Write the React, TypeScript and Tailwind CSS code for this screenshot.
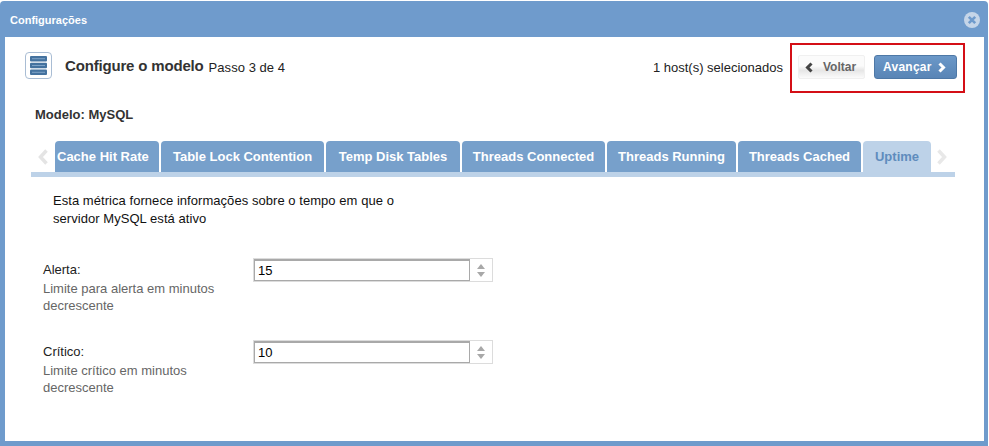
const TABS = [
  { label: "Cache Hit Rate", width: "w-[104px]", pad: "pl-[2px] text-left" },
  { label: "Table Lock Contention", width: "w-[163px]", pad: "text-center" },
  { label: "Temp Disk Tables", width: "w-[134px]", pad: "text-center" },
  { label: "Threads Connected", width: "w-[143px]", pad: "text-center" },
  { label: "Threads Running", width: "w-[129px]", pad: "text-center" },
  { label: "Threads Cached", width: "w-[123px]", pad: "text-center" },
];

const FIELDS = [
  { label: "Alerta:", help: "Limite para alerta em minutos decrescente", value: "15" },
  { label: "Crítico:", help: "Limite crítico em minutos decrescente", value: "10" },
];

function Chevron({ dir, w, h, sw, color }: { dir: "left" | "right"; w: number; h: number; sw: number; color: string }) {
  const d = dir === "left" ? `M${w - 1.5} 1.5 L2.5 ${h / 2} L${w - 1.5} ${h - 1.5}` : `M1.5 1.5 L${w - 2.5} ${h / 2} L1.5 ${h - 1.5}`;
  return (
    <svg width={w} height={h} viewBox={`0 0 ${w} ${h}`} className="flex-none">
      <path d={d} fill="none" stroke={color} strokeWidth={sw} />
    </svg>
  );
}

function ServerIcon() {
  return (
    <div className="flex h-[27px] w-[27px] flex-none items-center justify-center rounded-[4px] border border-[#a9bdd4] bg-white">
      <svg width="17" height="19" viewBox="0 0 17 19">
        <rect x="0" y="0" width="17" height="5.5" rx="1" fill="#44729f" />
        <rect x="0" y="6.7" width="17" height="5.5" rx="1" fill="#44729f" />
        <rect x="0" y="13.5" width="17" height="5.5" rx="1" fill="#44729f" />
        <rect x="2" y="2.2" width="13" height="1" fill="#7fa3c7" />
        <rect x="2" y="9" width="13" height="1" fill="#7fa3c7" />
        <rect x="2" y="15.8" width="13" height="1" fill="#7fa3c7" />
      </svg>
    </div>
  );
}

function CloseIcon() {
  return (
    <svg width="16" height="16" viewBox="0 0 16 16">
      <circle cx="8" cy="8" r="8" fill="#c5d5e8" />
      <path d="M4.8 4.8 L11.2 11.2 M11.2 4.8 L4.8 11.2" stroke="#6f9bcc" strokeWidth="2.6" />
    </svg>
  );
}

function NumberField({ value }: { value: string }) {
  return (
    <div className="flex h-[24px] w-[240px] flex-none border border-[#dcdcdc] bg-white">
      <div className="flex h-[22px] w-[216px] items-center border border-t-2 border-[#a9a9a9] pl-[3px] text-[13px] text-black">
        {value}
      </div>
      <div className="flex flex-1 flex-col items-center justify-center gap-[3px]">
        <div className="h-0 w-0 border-x-[4px] border-b-[5px] border-x-transparent border-b-[#a8a8a8]" />
        <div className="h-0 w-0 border-x-[4px] border-t-[5px] border-x-transparent border-t-[#a8a8a8]" />
      </div>
    </div>
  );
}

export default function App() {
  return (
    <div className="h-[446px] w-[989px] overflow-hidden bg-white font-['Liberation_Sans',Arial,sans-serif]">
      <div className="mt-px flex h-[445px] w-[988px] flex-col rounded-t-[4px] bg-[#6f9bcc]">
        {/* Title bar */}
        <div className="flex h-[36px] flex-none items-center justify-between pl-[10px] pr-[8px] pt-[2px]">
          <span className="text-[11px] font-bold text-white">Configurações</span>
          <CloseIcon />
        </div>

        {/* Body */}
        <div className="mb-[5px] ml-[5px] mr-[4px] flex-1 bg-white">
          {/* Header row */}
          <div className="flex h-[56px] items-center pl-[20px] pr-[19px] pt-[1px]">
            <ServerIcon />
            <span className="ml-[13px] mt-[1px] text-[15px] font-bold tracking-[-0.17px] text-[#333]">Configure o modelo</span>
            <span className="ml-[5px] mt-[5px] text-[13px] tracking-[0.05px] text-[#222]">Passo 3 de 4</span>
            <span className="ml-auto mr-[7px] mt-[5px] text-[13px] text-[#222]">1 host(s) selecionados</span>
            <div className="mt-[5px] box-border flex h-[50px] w-[175px] flex-none items-center gap-[9px] border-2 border-[#d40f16] pb-[2px] pl-[6px]">
              <button className="flex h-[24px] w-[67px] items-center rounded-[2px] border border-[#f0f0f0] bg-[linear-gradient(#fbfbfb_45%,#e6e6e6_65%,#fbfbfb)] pl-[6px] text-[12px] font-bold text-[#666]">
                <Chevron dir="left" w={8} h={11} sw={3} color="#444" />
                <span className="ml-[10px]">Voltar</span>
              </button>
              <button className="flex h-[24px] w-[83px] items-center rounded-[3px] border border-[#4e78a6] bg-[linear-gradient(#6b98c8,#5985b6)] pl-[8px] text-[12px] font-bold tracking-[0.25px] text-white">
                Avançar
                <span className="ml-[6px]">
                  <Chevron dir="right" w={8} h={11} sw={3} color="#fff" />
                </span>
              </button>
            </div>
          </div>

          <div className="mt-[15px] pl-[30px] text-[13px] font-bold leading-[14px] text-[#333]">Modelo: MySQL</div>

          {/* Tabs */}
          <div className="mx-[26px] mt-[19px] w-[924px] border-b-[5px] border-[#bdd2e8]">
            <div className="flex h-[31px]">
              <div className="flex w-[24px] flex-none items-center pl-[7px]">
                <Chevron dir="left" w={10} h={16} sw={3.5} color="#e4e4e4" />
              </div>
              <div className="flex gap-[2px]">
                {TABS.map((tab) => (
                  <div
                    key={tab.label}
                    className={`${tab.width} ${tab.pad} flex-none rounded-t-[4px] bg-[#77a0cb] text-[13px] font-bold leading-[31px] text-white`}
                  >
                    {tab.label}
                  </div>
                ))}
                <div className="w-[68px] flex-none rounded-t-[4px] bg-[#bdd2e8] text-center text-[13px] font-bold leading-[31px] text-[#5f8cbd]">
                  Uptime
                </div>
              </div>
              <div className="flex flex-none items-center pl-[6px]">
                <Chevron dir="right" w={10} h={16} sw={3.5} color="#e8e8e8" />
              </div>
            </div>
          </div>

          {/* Description */}
          <p className="ml-[48px] mt-[15px] w-[350px] text-[13px] leading-[18px] tracking-[0.05px] text-[#111]">
            Esta métrica fornece informações sobre o tempo em que o servidor MySQL está ativo
          </p>

          {/* Fields */}
          <div className="ml-[38px] mt-[30px] flex flex-col gap-[28px]">
            {FIELDS.map((field) => (
              <div key={field.label} className="flex h-[54px] items-start">
                <div className="w-[210px] flex-none pt-[3px] text-[13px]">
                  <div className="leading-[18px] text-[#222]">{field.label}</div>
                  <div className="mt-[1px] w-[180px] leading-[17px] text-[#666]">{field.help}</div>
                </div>
                <NumberField value={field.value} />
              </div>
            ))}
          </div>
        </div>
      </div>
    </div>
  );
}
